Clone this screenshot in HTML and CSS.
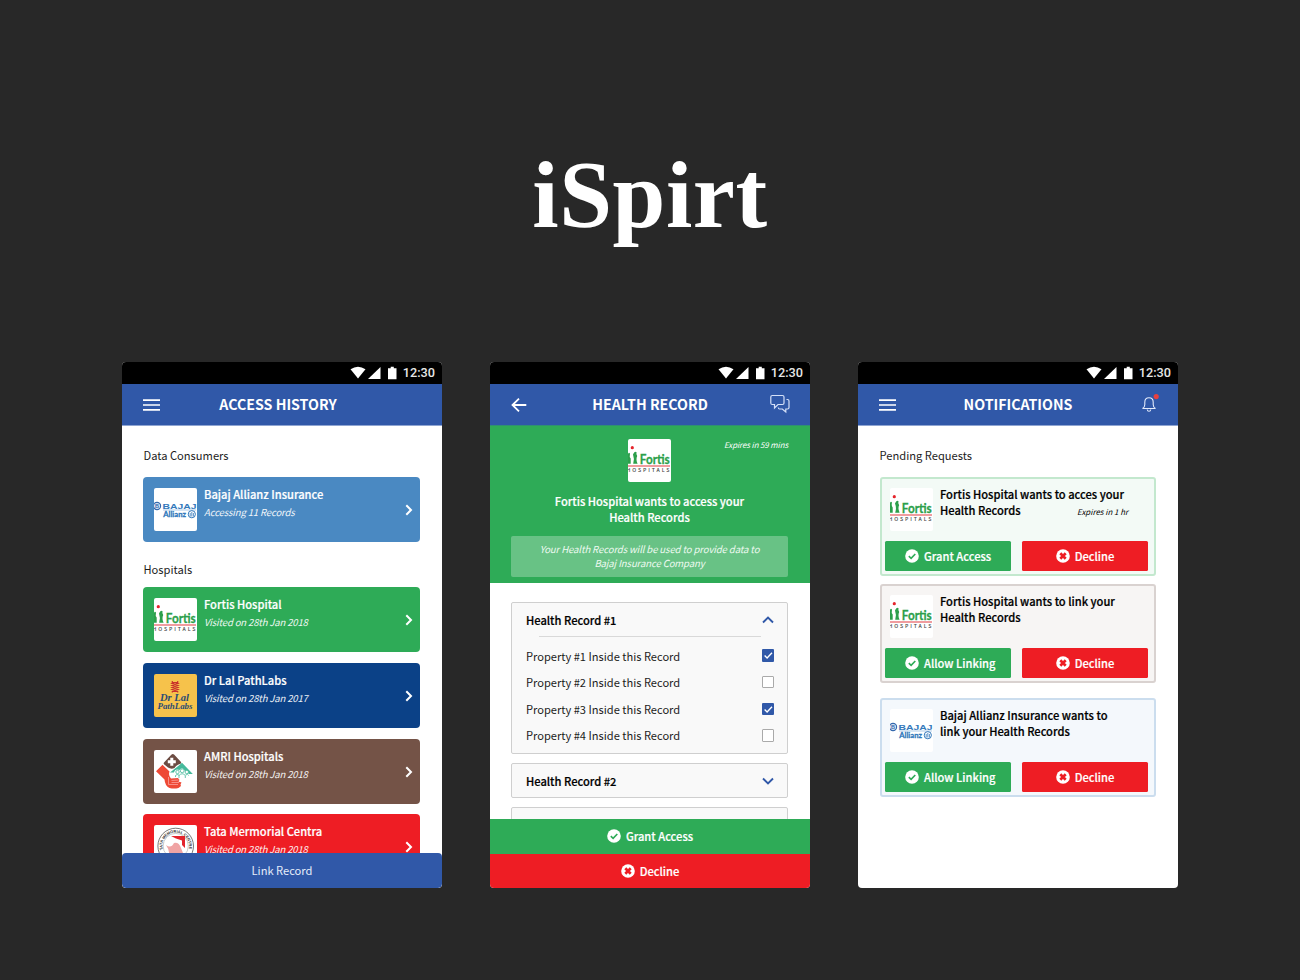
FILE: index.html
```html
<!DOCTYPE html>
<html lang="en">
<head>
<meta charset="utf-8">
<title>iSpirt</title>
<link rel="stylesheet" href="styles.css">
</head>
<body>
<svg class="defs" aria-hidden="true">
  <symbol id="status" viewBox="0 0 50 14">
    <path d="M0.500 3.300Q8 -1.700 15.500 3.300L8 12.600Z"/><path d="M18 13L30.500 1V13Z"/><path d="M38 2.200H40.700V0.800H43.800V2.200H46.500V13.200H38Z"/>
  </symbol>
  <symbol id="menu" viewBox="0 0 17 12"><path d="M0 1.200H17M0 6H17M0 10.800H17" fill="none" stroke="#fff" stroke-width="1.700"/></symbol>
  <symbol id="back" viewBox="0 0 16 14"><path d="M15.300 7H1.500M8 0.700L1.500 7L8 13.300" fill="none" stroke="#fff" stroke-width="1.800"/></symbol>
  <symbol id="chat" viewBox="0 0 20 20"><path d="M2.300 1.500H12.500Q14 1.500 14 3V9Q14 10.500 12.500 10.500H8L4.500 14V10.500H2.300Q0.800 10.500 0.800 9V3Q0.800 1.500 2.300 1.500ZM16.500 5.500H17.500Q19 5.500 19 7V13.500Q19 15 17.500 15H15.800V18L12.300 15H9.500Q8.500 15 8.200 13.500" fill="none" stroke="#d5e0f8" stroke-width="1.200"/></symbol>
  <symbol id="bell" viewBox="0 0 18 20"><path d="M1.500 14.500Q3.800 13.500 3.800 10.500V8.200Q3.800 3.800 8 3.800T12.200 8.200V10.500Q12.200 13.500 14.500 14.500ZM6.200 15.500Q6.500 17.300 8 17.300T9.800 15.500" fill="none" stroke="#e2eafb" stroke-width="1.100"/><circle cx="15.200" cy="2.600" r="2.600" fill="#e8403f"/></symbol>
  <symbol id="chev" viewBox="0 0 8 12"><path d="M1.300 1.300L6 6L1.300 10.700" fill="none" stroke="#fff" stroke-width="2"/></symbol>
  <symbol id="up" viewBox="0 0 12 8"><path d="M1 6.500L6 1.500L11 6.500" fill="none" stroke="#3058a8" stroke-width="1.900"/></symbol>
  <symbol id="down" viewBox="0 0 12 8"><path d="M1 1.500L6 6.500L11 1.500" fill="none" stroke="#3058a8" stroke-width="1.900"/></symbol>
  <symbol id="ok" viewBox="0 0 14 14"><circle cx="7" cy="7" r="6.800" fill="#fff"/><path d="M3.800 7.200L6.100 9.400L10.300 5" fill="none" stroke="#2eab57" stroke-width="1.600"/></symbol>
  <symbol id="no" viewBox="0 0 14 14"><circle cx="7" cy="7" r="6.800" fill="#fff"/><path d="M4.300 4.300L9.700 9.700M9.700 4.300L4.300 9.700" fill="none" stroke="#ee1d24" stroke-width="2.700"/></symbol>
  <symbol id="tick" viewBox="0 0 12 12"><path d="M2.500 6.300L4.900 8.600L9.600 3.600" fill="none" stroke="#fff" stroke-width="1.300"/></symbol>
  <symbol id="fortis" viewBox="0 0 43 43">
    <circle cx="4.300" cy="8.700" r="1.600" fill="#e5242b"/>
    <path d="M0 15Q.8 12.800 2 14.500Q1.200 18 2.700 19.500V24.800H0ZM5 15.500Q6.500 11.500 8.600 13.300Q7.800 15.500 9.200 17Q7.600 20.500 9.600 24.800H5.200Q6.800 20 5 15.500Z" fill="#2c9f4b"/>
    <text x="11.800" y="25" textLength="30" lengthAdjust="spacingAndGlyphs" font-family="Lato" font-weight="700" font-size="14" fill="#2c9f4b" stroke="#2c9f4b" stroke-width=".3">Fortis</text>
    <path d="M0 27H42" stroke="#e23a40" stroke-width="1.200"/>
    <text x="-1.500" y="32.800" textLength="43" font-family="Noto Sans CJK JP" font-weight="500" font-size="5.200" fill="#444">HOSPITALS</text>
  </symbol>
  <symbol id="bajaj" viewBox="0 0 43 43">
    <circle cx="3" cy="18" r="3.600" fill="#dfe9f5" stroke="#3569ae" stroke-width="1.200"/>
    <text x="1" y="20" font-family="Liberation Sans" font-weight="700" font-size="5.500" fill="#3569ae">B</text>
    <text x="8.500" y="20.500" textLength="34" lengthAdjust="spacingAndGlyphs" font-family="Liberation Sans" font-weight="700" font-size="7.800" fill="#3479bb">BAJAJ</text>
    <path d="M9 22H42" stroke="#8bb5de" stroke-width="0.700"/>
    <text x="9.200" y="29" textLength="22.800" lengthAdjust="spacingAndGlyphs" font-family="Lato" font-weight="700" font-size="8.300" fill="#2d77bb" stroke="#2d77bb" stroke-width=".3">Allianz</text>
    <circle cx="37.800" cy="26.200" r="3.600" fill="none" stroke="#3479bb" stroke-width="1"/><path d="M36.200 28.500V25M37.800 28.500V24M39.400 28.500V25" stroke="#3479bb" stroke-width="0.800"/>
  </symbol>
  <symbol id="lal" viewBox="0 0 43 43">
    <path d="M18 7.500L24 9.500L18 11.500L24 13.500L18 15.500L24 17.500M24 7.500L18 9.500L24 11.500L18 13.500L24 15.500L18 17.500M18.300 7V18.500M23.700 7V18.500" fill="none" stroke="#c9302c" stroke-width="1.200"/>
    <g font-family="Liberation Serif" font-style="italic" font-weight="700" fill="#2b4b75"><text x="6" y="26.500" font-size="9.500" textLength="29" lengthAdjust="spacingAndGlyphs">Dr Lal</text><text x="3.500" y="35" font-size="8.500" textLength="35" lengthAdjust="spacingAndGlyphs">PathLabs</text></g>
  </symbol>
  <symbol id="amri" viewBox="0 0 43 43">
    <path d="M17.300 4.700Q18.800 3.500 20.300 4.700L27 12Q27.500 13 26.500 13.700Q22 15 20.500 18Q17 19.500 14 17.500L10 14.200Q9.300 13.300 10 12.500Z" fill="#6c4c43"/>
    <path d="M13.800 11.700H21.800M17.800 7.700V15.700" stroke="#fff" stroke-width="3"/>
    <path d="M28 12.800L38.800 24H34.500Q34.500 20.500 31 21Q28.500 16 25.500 20Q21 18.500 20 22.500H16L21 18.500Q24 16.500 28 12.800Z" fill="#45b99b"/>
    <circle cx="28.200" cy="20.800" r="1.900" fill="#fff" stroke="#45b99b" stroke-width=".8"/><circle cx="23.500" cy="22" r="1.700" fill="#fff" stroke="#45b99b" stroke-width=".8"/><circle cx="32.800" cy="22" r="1.700" fill="#fff" stroke="#45b99b" stroke-width=".8"/>
    <path d="M21.500 27V25.500Q23 23.500 25 25.200V28M25 25.500Q28.200 22 31.300 25.500V28M31.500 25Q34 23.500 34.700 25.500" fill="none" stroke="#45b99b" stroke-width=".8"/>
    <path d="M8.500 14.800L15.500 21.500Q14 25 17 28.500L24 28L25.500 30L24.500 31.500L27.500 32.500L26.500 34.500L27 36L24.500 38Q20 39 15.500 38Q11 36 10.500 29.500L2 21.300Z" fill="#ee4935"/>
    <path d="M14.500 27V34.500H24M17.500 30.500L24.500 30M17.500 32.500L25 32.500" fill="none" stroke="#fbb" stroke-width=".6"/>
  </symbol>
  <symbol id="tata" viewBox="0 0 43 43">
    <defs><path id="ring" d="M10.400 32.300A16 16 0 1 1 33 32.300"/></defs>
    <circle cx="21.700" cy="21" r="12.600" fill="none" stroke="#999" stroke-width=".5"/>
    <text font-family="Liberation Sans" font-weight="700" font-size="4.600" fill="#333" transform="translate(3.600 3.500) scale(.835)"><textPath href="#ring" textLength="58" startOffset="8">TATA MEMORIAL CENTRE</textPath></text>
    <path d="M9.100 33.600A17.800 17.800 0 1 1 34.300 33.600" fill="none" stroke="#555" stroke-width=".8"/>
    <path d="M17 11H31V23L28 20V15.500L22 13.500Z" fill="#e3242c"/><path d="M12 20Q17 24 20 18Q25 17 27 23L31 33H14Q17 27 12 20Z" fill="#f0a4a4"/>
  </symbol>
</svg>

<main class="stage">
  <h1 class="brand">iSpirt</h1>
  <div class="phones">

    <section class="phone">
      <div class="status"><svg class="status-icons"><use href="#status"/></svg><span>12:30</span></div>
      <header class="appbar"><svg class="i-menu"><use href="#menu"/></svg><h2 class="t-access">ACCESS HISTORY</h2></header>
      <div class="screen history">
        <h3 class="label">Data Consumers</h3>
        <article class="entry sky"><svg class="logo"><use href="#bajaj"/></svg><div class="info"><b>Bajaj Allianz Insurance</b><i>Accessing 11 Records</i></div><svg class="i-chev"><use href="#chev"/></svg></article>
        <h3 class="label hospitals">Hospitals</h3>
        <article class="entry green"><svg class="logo"><use href="#fortis"/></svg><div class="info"><b>Fortis Hospital</b><i>Visited on 28th Jan 2018</i></div><svg class="i-chev"><use href="#chev"/></svg></article>
        <article class="entry navy"><svg class="logo amber"><use href="#lal"/></svg><div class="info"><b>Dr Lal PathLabs</b><i>Visited on 28th Jan 2017</i></div><svg class="i-chev"><use href="#chev"/></svg></article>
        <article class="entry brown"><svg class="logo"><use href="#amri"/></svg><div class="info"><b>AMRI Hospitals</b><i>Visited on 28th Jan 2018</i></div><svg class="i-chev"><use href="#chev"/></svg></article>
        <article class="entry red"><svg class="logo"><use href="#tata"/></svg><div class="info"><b>Tata Mermorial Centra</b><i>Visited on 28th Jan 2018</i></div><svg class="i-chev"><use href="#chev"/></svg></article>
      </div>
      <footer class="link-bar">Link Record</footer>
    </section>

    <section class="phone">
      <div class="status"><svg class="status-icons"><use href="#status"/></svg><span>12:30</span></div>
      <header class="appbar on-green"><svg class="i-back"><use href="#back"/></svg><h2>HEALTH RECORD</h2><svg class="i-chat"><use href="#chat"/></svg></header>
      <div class="request">
        <i class="expiry">Expires in 59 mins</i>
        <svg class="logo"><use href="#fortis"/></svg>
        <p class="ask">Fortis Hospital wants to access your<br>Health Records</p>
        <p class="notice">Your Health Records will be used to provide data to<br>Bajaj Insurance Company</p>
      </div>
      <div class="screen records">
        <article class="record">
          <div class="record-head"><b>Health Record #1</b><svg class="i-arrow"><use href="#up"/></svg></div>
          <ul class="props">
            <li><span>Property #1 Inside this Record</span><span class="box on"><svg><use href="#tick"/></svg></span></li>
            <li><span>Property #2 Inside this Record</span><span class="box"></span></li>
            <li><span>Property #3 Inside this Record</span><span class="box on"><svg><use href="#tick"/></svg></span></li>
            <li><span>Property #4 Inside this Record</span><span class="box"></span></li>
          </ul>
        </article>
        <article class="record closed"><div class="record-head"><b>Health Record #2</b><svg class="i-arrow"><use href="#down"/></svg></div></article>
        <article class="record closed"></article>
      </div>
      <button class="wide ok"><svg><use href="#ok"/></svg>Grant Access</button>
      <button class="wide no"><svg><use href="#no"/></svg>Decline</button>
    </section>

    <section class="phone">
      <div class="status"><svg class="status-icons"><use href="#status"/></svg><span>12:30</span></div>
      <header class="appbar"><svg class="i-menu"><use href="#menu"/></svg><h2>NOTIFICATIONS</h2><svg class="i-bell"><use href="#bell"/></svg></header>
      <div class="screen pending">
        <h3 class="label">Pending Requests</h3>
        <article class="card mint"><div class="card-top"><svg class="logo"><use href="#fortis"/></svg><p>Fortis Hospital wants to acces your<br><span class="split">Health Records<i>Expires in 1 hr</i></span></p></div>
          <div class="actions"><button class="ok"><svg><use href="#ok"/></svg>Grant Access</button><button class="no"><svg><use href="#no"/></svg>Decline</button></div></article>
        <article class="card sand"><div class="card-top"><svg class="logo"><use href="#fortis"/></svg><p>Fortis Hospital wants to link your<br>Health Records</p></div>
          <div class="actions"><button class="ok"><svg><use href="#ok"/></svg>Allow Linking</button><button class="no"><svg><use href="#no"/></svg>Decline</button></div></article>
        <article class="card ice"><div class="card-top"><svg class="logo"><use href="#bajaj"/></svg><p>Bajaj Allianz Insurance wants to<br>link your Health Records</p></div>
          <div class="actions"><button class="ok"><svg><use href="#ok"/></svg>Allow Linking</button><button class="no"><svg><use href="#no"/></svg>Decline</button></div></article>
      </div>
    </section>
  </div>
</main>
</body>
</html>
```
FILE: styles.css
```css
* { box-sizing: border-box; }
body { margin: 0; background: #282828; overflow: hidden; font-family: "Noto Sans CJK JP", "Noto Sans", sans-serif; }
h1, h2, h3, p, ul { margin: 0; padding: 0; }
svg { display: block; flex: none; }
.defs { width: 0; height: 0; position: absolute; }

.stage { width: 1300px; height: 980px; display: flex; flex-direction: column; align-items: center; padding-top: 142px; }
.brand { height: 220px; flex: none; color: #fff; font: 700 95px/106px "Liberation Serif", serif; letter-spacing: .5px; }
.phones { display: flex; gap: 48px; }
.phone { width: 320px; height: 526px; border-radius: 4px; background: #fff; overflow: hidden; display: flex; flex-direction: column; }

.status { height: 22px; flex: none; background: #000; display: flex; align-items: center; justify-content: flex-end; gap: 3px; padding-right: 7px; color: #e6e6e6; font: 500 12.700px/22px Roboto, sans-serif; }
.status-icons { width: 50px; height: 14px; fill: #fff; }
.appbar { height: 42px; flex: none; background: #3058a8; display: grid; grid-template-columns: 60px 1fr 60px; align-items: center; border-bottom: 1px solid #8fa5d2; }
.appbar.on-green { border-bottom-color: #2f8f72; }
.appbar h2 { grid-column: 2; grid-row: 1; color: #fff; text-align: center; font-size: 14.200px; line-height: 20px; font-weight: 700; white-space: nowrap; padding-bottom: 1px; }
.appbar .t-access { padding-right: 8px; }
.appbar svg { grid-row: 1; }
.i-menu { width: 17px; height: 12px; margin-left: 21px; }
.i-back { width: 16px; height: 14px; margin-left: 21px; }
.i-chat { width: 20px; height: 20px; margin-left: 19.500px; margin-top: -1px; }
.i-bell { width: 18px; height: 20px; margin-left: 23px; margin-top: -2px; }

.screen { flex: 1; min-height: 0; overflow: hidden; padding: 0 22px 0 21px; }
.label { font-size: 11.150px; line-height: 20px; font-weight: 400; color: #1c1c1c; padding-left: .5px; margin: 19px 0 12px; }
.label.hospitals { margin: 17px 0 8px; }
.logo { width: 43px; height: 43px; border-radius: 2px; background: #fff; overflow: hidden; }
.amber { background: #f6c24b; }

.entry { height: 65px; border-radius: 4px; padding: 11px 7px 0 11px; display: flex; color: #fff; margin-bottom: 11px; }
.info { flex: 1; padding-left: 7px; margin-top: -3.500px; font-size: 11.150px; line-height: 18px; }
.info b { display: block; font-weight: 500; height: 18px; -webkit-text-stroke: .2px; }
.info i { display: block; font-size: 9.600px; letter-spacing: -.18px; opacity: .92; }
.i-chev { width: 8px; height: 12px; align-self: flex-start; margin-top: 16px; }
.sky { background: #4a89c2; }
.green { background: #2eab57; }
.navy { background: #0b4187; }
.brown { background: #745347; margin-bottom: 10px; }
.red { background: #ee1d24; }
.link-bar { height: 35px; flex: none; border-radius: 4px; background: #3058a8; color: #e6edfa; text-align: center; font-size: 11.150px; line-height: 35px; }

.request { height: 157px; flex: none; background: #2eab57; color: #fff; display: grid; justify-items: center; align-content: start; padding: 13px 22px 0 21px; }
.request .logo, .expiry { grid-area: 1 / 1; }
.expiry { justify-self: end; font-size: 7.900px; letter-spacing: -.08px; line-height: 12px; }
.ask { font-size: 11.150px; line-height: 16px; font-weight: 500; -webkit-text-stroke: .2px; text-align: center; margin-top: 11px; }
.notice { width: 277px; height: 41px; margin-top: 11px; padding-top: 7px; border-radius: 2px; background: rgba(255,255,255,.28); font-size: 9.600px; letter-spacing: -.13px; line-height: 13.500px; font-style: italic; text-align: center; white-space: nowrap; color: #eefaf1; }
.records { padding-top: 19px; }
.record { border: 1px solid #cfcfcf; border-radius: 2px; background: #f9f9f9; height: 152px; padding: 0 13px 0 14px; margin-bottom: 9px; }
.record.closed { height: 35px; }
.record-head { height: 33px; display: flex; align-items: center; justify-content: space-between; font-size: 11.150px; line-height: 18px; }
.record-head b { font-weight: 500; color: #000; -webkit-text-stroke: .2px; }
.i-arrow { width: 12px; height: 8px; }
.props { list-style: none; }
.props::before { content: ""; display: block; height: 1px; margin: 0 13px 5.200px; background: #d9d9d9; }
.props li { display: flex; justify-content: space-between; align-items: center; height: 26.670px; font-size: 11.100px; line-height: 18px; color: #1c1c1c; }
.box { width: 12.500px; height: 12.500px; border: 1px solid #aaa; background: #fff; border-radius: 1px; }
.box.on { border: 0; background: #3058a8; }
.box svg { width: 12.500px; height: 12.500px; }

button { border: 0; padding: 0 0 1px; color: #fff; font: 500 11.150px/18px "Noto Sans CJK JP", sans-serif; -webkit-text-stroke: .2px; display: flex; align-items: center; justify-content: center; gap: 5px; }
button svg { width: 14px; height: 14px; }
.wide { height: 34px; flex: none; }
.wide.ok { height: 35px; }
.ok { background: #2eab57; }
.no { background: #ee1d24; }
.wide.no { padding: 0; }

.pending { padding: 0 22px; }
.pending .label { padding: 0; margin-left: -.5px; }
.card { height: 99px; border: 2px solid; border-radius: 3px; padding: 9px 6px 0 3px; }
.card-top { display: flex; height: 53px; padding-left: 5px; }
.card p { flex: 1; padding-left: 7px; margin-top: -2.500px; font-size: 11.150px; line-height: 16px; font-weight: 500; -webkit-text-stroke: .2px; color: #000; }
.split { display: flex; justify-content: space-between; padding-right: 20px; }
.split i { font-size: 7.900px; font-weight: 400; line-height: 20px; height: 16px; -webkit-text-stroke: 0; }
.actions { display: flex; justify-content: space-between; }
.actions button { width: 126px; height: 30px; border-radius: 1.500px; }
.actions .ok { justify-content: flex-start; padding-left: 20px; }
.mint { background: #f3faf6; border-color: #c3e8ce; }
.sand { background: #f7f5f4; border-color: #d9d2d0; margin-top: 8px; }
.ice { background: #f4f8fc; border-color: #cbddee; margin-top: 15px; }
```
